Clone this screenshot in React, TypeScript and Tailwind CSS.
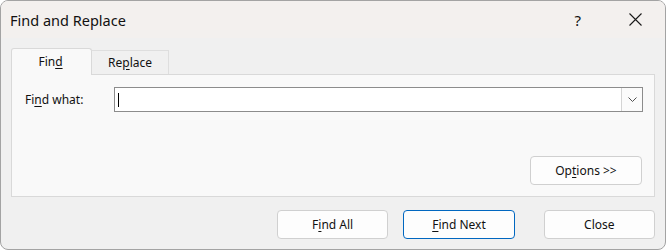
import React from "react";

const font = { fontFamily: '"Segoe UI", "Noto Sans", "Open Sans", sans-serif' };

function Btn({ children, primary, className = "" }: { children: React.ReactNode; primary?: boolean; className?: string }) {
  return (
    <div
      className={
        "flex items-center justify-center rounded-[4px] text-[12px] text-[#111111] " +
        (primary ? "border border-[#0067c0] bg-[#fdfdfd] " : "border border-[#d0d0d0] bg-[#fdfdfd] ") +
        className
      }
    >
      {children}
    </div>
  );
}

export default function App() {
  return (
    <div className="w-[667px] h-[250px] bg-white" style={font}>
      <div className="w-[666px] h-[250px] border border-[#a3a3a3] rounded-[8px] bg-[#f0f0f0] flex flex-col overflow-hidden">
        {/* Title bar */}
        <div className="h-[37px] bg-[#f3f0ee] flex items-center shrink-0">
          <span className="ml-[9px] text-[14.5px] text-[#111111] leading-none mt-[1px]">Find and Replace</span>
          <span className="ml-auto text-[15px] text-[#111111] leading-none mt-[1px]">?</span>
          <svg className="ml-[48px] mr-[23px]" width="13" height="13" viewBox="0 0 13 13">
            <path d="M0.5 0.5 L12.5 12.5 M12.5 0.5 L0.5 12.5" stroke="#1a1a1a" strokeWidth="1.1" fill="none" />
          </svg>
        </div>
        {/* Body */}
        <div className="flex flex-col px-[10px] pt-[10px]">
          {/* Tabs */}
          <div className="flex items-end h-[26px]">
            <div className="w-[81px] h-[27px] border border-b-0 border-[#d9d9d9] bg-[#f9f9f9] rounded-t-[3px] flex items-center justify-center text-[12px] text-[#111111] relative z-10 -mb-[1px]">
              <span className="-ml-[2px]">
                Fin<u className="underline-offset-2">d</u>
              </span>
            </div>
            <div className="w-[77px] h-[24px] border border-b-0 border-l-0 border-[#dedede] bg-[#f0f0f0] flex items-center justify-center text-[12px] text-[#111111]">
              <span>
                Re<u className="underline-offset-2">p</u>lace
              </span>
            </div>
          </div>
          {/* Panel */}
          <div className="w-[644px] h-[123px] border border-[#d9d9d9] bg-[#f9f9f9] flex flex-col">
            <div className="flex items-center mt-[12px] pl-[13px] pr-[11px]">
              <span className="text-[12px] text-[#111111] w-[89px]">
                Fi<u className="underline-offset-2">n</u>d what:
              </span>
              <div className="flex-1 h-[25px] border border-[#8c8c8c] bg-white flex items-stretch">
                <div className="flex-1 flex items-center pl-[3px]">
                  <div className="w-[1px] h-[14px] bg-black" />
                </div>
                <div className="w-[21px] border-l border-[#d4d4d4] bg-[#fbfbfb] flex items-center justify-center">
                  <svg width="9" height="5" viewBox="0 0 9 5">
                    <path d="M0.5 0.5 L4.5 4.5 L8.5 0.5" stroke="#505050" strokeWidth="1" fill="none" />
                  </svg>
                </div>
              </div>
            </div>
            <div className="flex-1" />
            <div className="flex justify-end pr-[12px] mb-[11px]">
              <Btn className="w-[112px] h-[29px]">
                <span>
                  Op<u className="underline-offset-2">t</u>ions &gt;&gt;
                </span>
              </Btn>
            </div>
          </div>
          {/* Bottom buttons */}
          <div className="flex mt-[13px] pl-[266px]">
            <Btn className="w-[112px] h-[29px]">
              <span>
                F<u className="underline-offset-2">i</u>nd All
              </span>
            </Btn>
            <Btn primary className="w-[112px] h-[29px] ml-[15px]">
              <span>
                <u className="underline-offset-2">F</u>ind Next
              </span>
            </Btn>
            <Btn className="w-[112px] h-[29px] ml-[29px]">
              <span>Close</span>
            </Btn>
          </div>
        </div>
      </div>
    </div>
  );
}
